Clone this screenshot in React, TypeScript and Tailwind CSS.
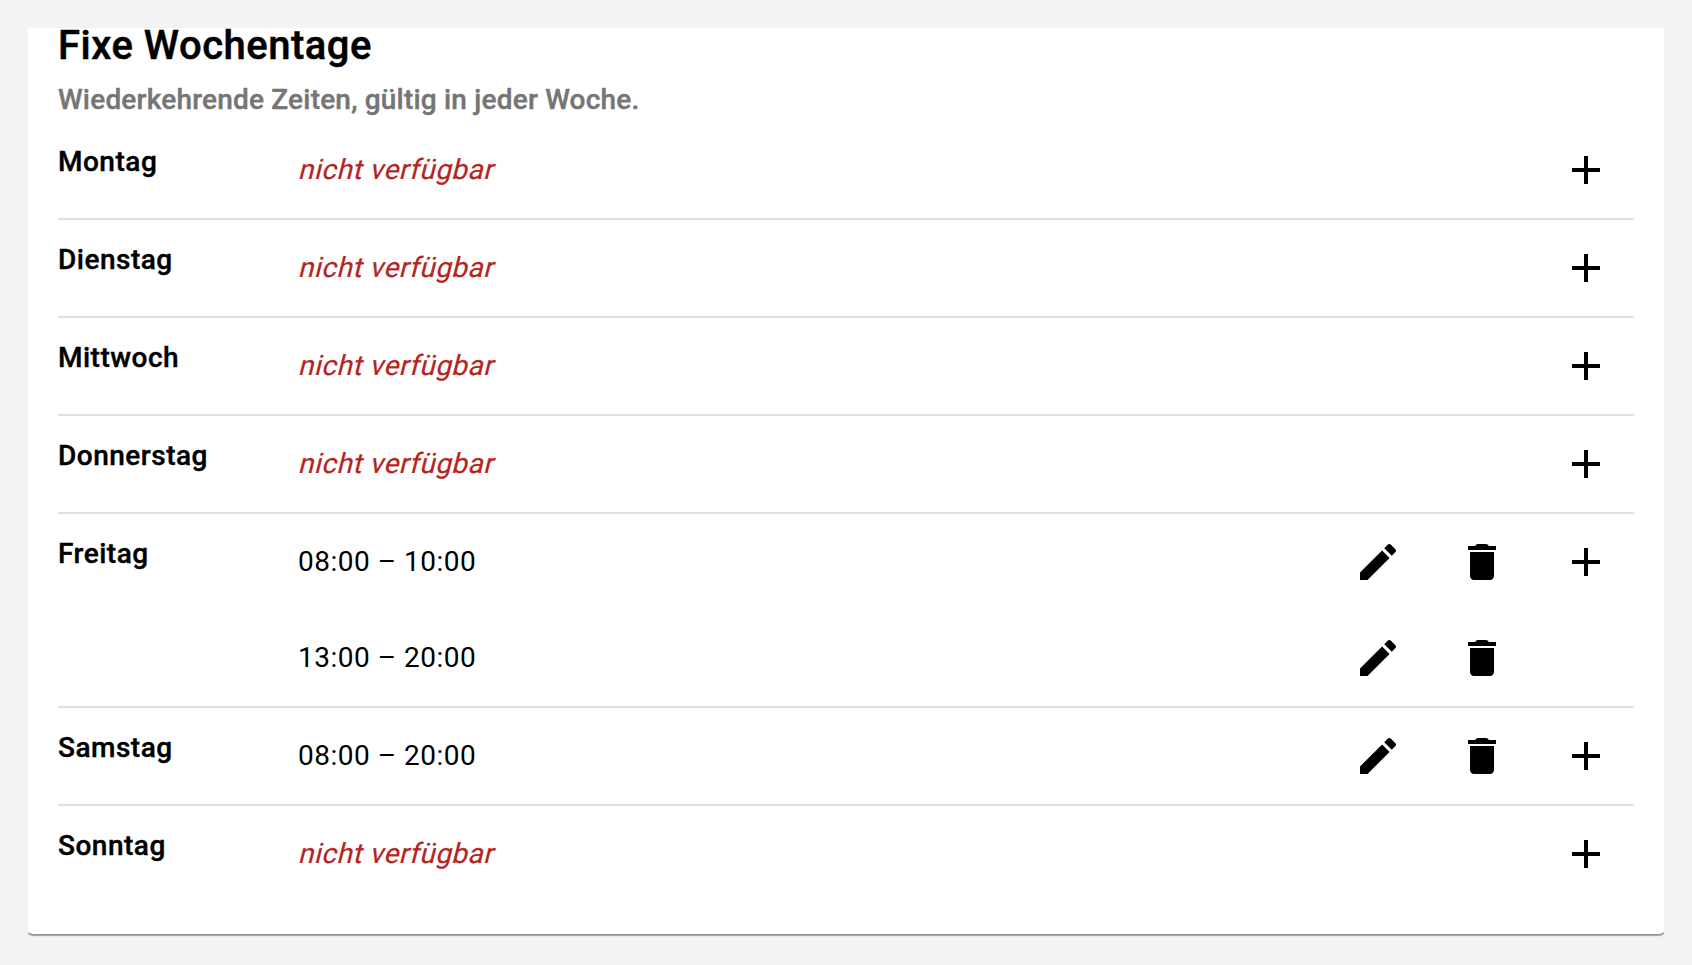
import React from "react";

interface IDay {
  name: string;
  times: string[];
}

const days: IDay[] = [
  { name: "Montag", times: [] },
  { name: "Dienstag", times: [] },
  { name: "Mittwoch", times: [] },
  { name: "Donnerstag", times: [] },
  { name: "Freitag", times: ["08:00 – 10:00", "13:00 – 20:00"] },
  { name: "Samstag", times: ["08:00 – 20:00"] },
  { name: "Sonntag", times: [] },
];

const icons = {
  edit: "M3 17.25V21h3.75L17.81 9.94l-3.75-3.75L3 17.25zM20.71 7.04c.39-.39.39-1.02 0-1.41l-2.34-2.34c-.39-.39-1.02-.39-1.41 0l-1.83 1.83 3.75 3.75 1.83-1.83z",
  delete:
    "M6 19c0 1.1.9 2 2 2h8c1.1 0 2-.9 2-2V7H6v12zM19 4h-3.5l-.71-.71c-.18-.18-.44-.29-.7-.29H9.91c-.26 0-.52.11-.7.29L8.5 4H5v2h14V4z",
  add: "M19 13h-6v6h-2v-6H5v-2h6V5h2v6h6v2z",
};

interface IconButtonProps {
  icon: keyof typeof icons;
  label: string;
}

const IconButton: React.FC<IconButtonProps> = ({ icon, label }) => (
  <button
    aria-label={label}
    className="flex size-24 items-center justify-center rounded-full"
  >
    <svg viewBox="0 0 24 24" className="size-12 fill-black">
      <path d={icons[icon]} />
    </svg>
  </button>
);

const DayRow: React.FC<{ day: IDay }> = ({ day }) => (
  <li className="flex border-b-2 border-[#e0e0e0] last:border-b-0">
    <h3 className="w-60 pt-5 text-[28px] leading-10 font-medium tracking-[0.5px] [-webkit-text-stroke:0.4px]">
      {day.name}
    </h3>
    <div className="flex-1">
      {day.times.length === 0 && (
        <div className="flex h-24 items-center text-[28px] tracking-[0.5px] text-[#b3261e] [-webkit-text-stroke:0.2px]">
          <span className="origin-[0_70%] -skew-x-14">nicht verfügbar</span>
        </div>
      )}
      {day.times.map((time) => (
        <div key={time} className="flex h-24 items-center gap-2">
          <span className="flex-1 text-[28px] tracking-[0.5px]">{time}</span>
          <IconButton icon="edit" label="Bearbeiten" />
          <IconButton icon="delete" label="Löschen" />
        </div>
      ))}
    </div>
    <div className="ml-2">
      <IconButton icon="add" label="Hinzufügen" />
    </div>
  </li>
);

const App: React.FC = () => {
  return (
    <div className="h-[965px] bg-[#f3f3f3] p-7 font-['Roboto',sans-serif] text-black">
      <section className="h-[906px] rounded-br-[6px_3px] rounded-bl-[6px_3px] bg-white px-[30px] shadow-[0_2px_1px_rgba(0,0,0,0.37)] [clip-path:inset(-12px_0_-8px_0)]">
        <h1 className="h-[50px] text-[40px] leading-[36px] font-medium tracking-[0.5px] [-webkit-text-stroke:0.5px]">
          Fixe Wochentage
        </h1>
        <p className="h-[44px] text-[28px] leading-[44px] font-medium tracking-[0.2px] text-[#757575] [-webkit-text-stroke:0.4px]">
          Wiederkehrende Zeiten, gültig in jeder Woche.
        </p>
        <ul>
          {days.map((day) => (
            <DayRow key={day.name} day={day} />
          ))}
        </ul>
      </section>
    </div>
  );
};

export default App;
